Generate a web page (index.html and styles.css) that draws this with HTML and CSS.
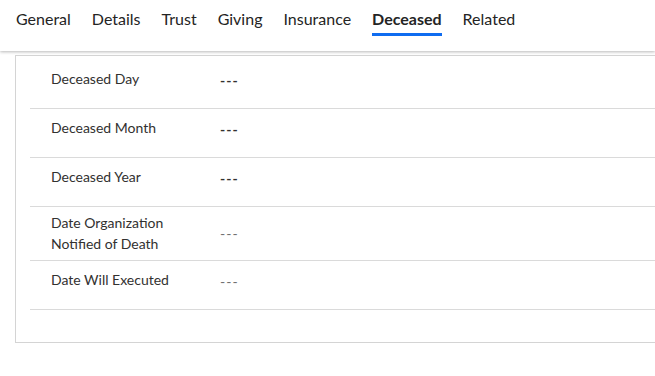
FILE: index.html
```html
<!DOCTYPE html>
<html lang="en">
<head>
<meta charset="utf-8">
<title>Deceased</title>
<link rel="stylesheet" href="styles.css">
</head>
<body>
<div class="tabs">
    <a class="tab" href="#">General</a>
    <a class="tab" href="#">Details</a>
    <a class="tab" href="#">Trust</a>
    <a class="tab" href="#">Giving</a>
    <a class="tab" href="#">Insurance</a>
    <a class="tab active" href="#">Deceased</a>
    <a class="tab" href="#">Related</a>
</div>
<div class="section">
    <div class="row">
        <div class="label">Deceased Day</div>
        <div class="value">---</div>
    </div>
    <div class="row">
        <div class="label">Deceased Month</div>
        <div class="value">---</div>
    </div>
    <div class="row">
        <div class="label">Deceased Year</div>
        <div class="value">---</div>
    </div>
    <div class="row tall">
        <div class="label">Date Organization<br>Notified of Death</div>
        <div class="value empty">---</div>
    </div>
    <div class="row">
        <div class="label">Date Will Executed</div>
        <div class="value empty">---</div>
    </div>
</div>
</body>
</html>
```

FILE: styles.css
```css
body,div{margin:0;padding:0;}
body{background:#fff;font:14px/20px "Lato","Segoe UI",sans-serif;color:#323130;overflow:hidden;}
a{color:#242424;text-decoration:none;}

.tabs{display:flex;gap:21px;height:51px;padding:0 0 0 16px;box-shadow:0 1px 3px rgba(0,0,0,.28);position:relative;}
.tab{font-size:16px;line-height:22px;padding-top:8px;height:25px;border-bottom:3px solid transparent;}
.tab.active{font-weight:700;border-bottom-color:#0f6cf0;}

.section{margin:4px 0 0 15px;border:1px solid #d4d4d4;border-right:0;padding:4px 0 32px 14px;}
.row{display:grid;grid-template-columns:169px 1fr;min-height:48px;padding-left:21px;border-bottom:1px solid #dadada;}
.label{padding-top:9px;line-height:20px;}
.value{line-height:42px;font-weight:700;color:#323130;letter-spacing:1px;}
.value.empty{font-weight:400;color:#707070;}
.row.tall{align-items:center;}
.row.tall .label{padding:5px 0 6px;line-height:21px;}
```
